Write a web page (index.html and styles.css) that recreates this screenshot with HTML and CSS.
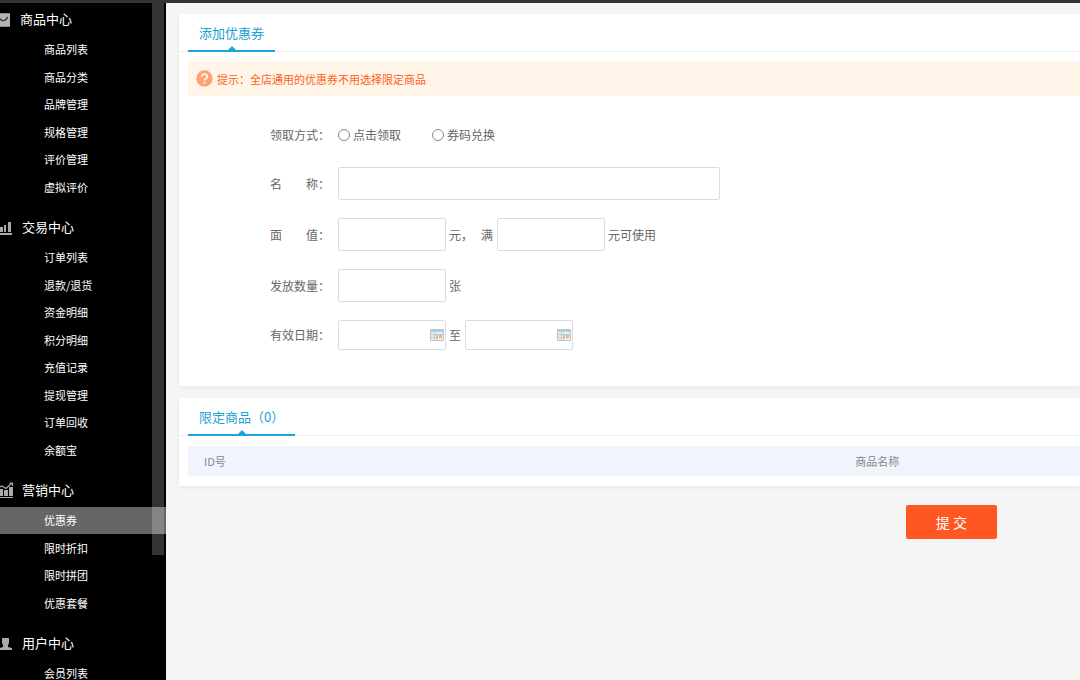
FILE: index.html
```html
<!DOCTYPE html>
<html lang="zh-CN">
<head>
<meta charset="utf-8">
<title>添加优惠券</title>
<link rel="stylesheet" href="styles.css">
</head>
<body>
<div class="topbar"></div>
<div class="layout">
  <nav class="sidebar">
    <div class="scroll-thumb"></div>
    <section class="group">
      <h2 class="group-title"><svg class="group-icon" width="14" height="16" viewBox="0 0 14 16"><path fill="#b4b4b4" d="M0 2h10v14H0z"/><path fill="none" stroke="#333" stroke-width="1.3" d="M0 7.500c1.500 3 6 3 7.500-1.500"/><path stroke="#888" d="M0 2.500h10M0 15.500h10"/></svg><span class="tight">商品中心</span></h2>
      <ul class="menu">
        <li><a href="#">商品列表</a></li>
        <li><a href="#">商品分类</a></li>
        <li><a href="#">品牌管理</a></li>
        <li><a href="#">规格管理</a></li>
        <li><a href="#">评价管理</a></li>
        <li><a href="#">虚拟评价</a></li>
      </ul>
    </section>
    <section class="group">
      <h2 class="group-title"><svg class="group-icon" width="14" height="16" viewBox="0 0 14 16"><path fill="#aaa" d="M0 8h3v5H0zM4 6h2v7H4zM8 3h3v10H8zM0 14h12v2H0z"/></svg><span>交易中心</span></h2>
      <ul class="menu">
        <li><a href="#">订单列表</a></li>
        <li><a href="#">退款/退货</a></li>
        <li><a href="#">资金明细</a></li>
        <li><a href="#">积分明细</a></li>
        <li><a href="#">充值记录</a></li>
        <li><a href="#">提现管理</a></li>
        <li><a href="#">订单回收</a></li>
        <li><a href="#">余额宝</a></li>
      </ul>
    </section>
    <section class="group">
      <h2 class="group-title"><svg class="group-icon" width="14" height="16" viewBox="0 0 14 16"><path fill="#aaa" d="M0 7h3v7H0zM4 8h4v6H4zM9 5h4v9H9zM0 15h13v1H0z"/><path fill="none" stroke="#aaa" stroke-width="1.200" d="M0 5l2-1 4 2.500 6-5.500M9.500 1h3v3"/></svg><span>营销中心</span></h2>
      <ul class="menu">
        <li class="active"><a href="#" aria-current="page">优惠券</a></li>
        <li><a href="#">限时折扣</a></li>
        <li><a href="#">限时拼团</a></li>
        <li><a href="#">优惠套餐</a></li>
      </ul>
    </section>
    <section class="group">
      <h2 class="group-title"><svg class="group-icon" width="14" height="16" viewBox="0 0 14 16"><path fill="#aaa" d="M2 3h7v5L8 10v2l4 1v2H0v-2l3-1v-2L2 8z"/></svg><span>用户中心</span></h2>
      <ul class="menu">
        <li><a href="#">会员列表</a></li>
      </ul>
    </section>
  </nav>
  <main class="content">
    <form class="coupon-form">
      <section class="panel">
        <header class="panel-head"><h1 class="tab">添加优惠券</h1></header>
        <p class="tip"><svg width="17" height="17" viewBox="0 0 17 17"><circle cx="8.500" cy="8.500" r="8.200" fill="#ffa27a"/><path fill="none" stroke="#fff3e6" stroke-width="1.800" d="M5.800 6.800c0-3.600 5.500-3.600 5.500-.4 0 2-2.700 2-2.700 4.200"/><circle cx="8.600" cy="12.800" r="1.100" fill="#fff3e6"/></svg>提示：全店通用的优惠券不用选择限定商品</p>
        <div class="fields">
          <div class="row" role="radiogroup" aria-labelledby="way">
            <span class="label" id="way">领取方式：</span>
            <label class="choice"><input class="radio" type="radio" name="way">点击领取</label>
            <label class="choice"><input class="radio" type="radio" name="way">券码兑换</label>
          </div>
          <div class="row">
            <label class="label" for="name">名　　称：</label>
            <input class="box wide" id="name" type="text">
          </div>
          <div class="row">
            <label class="label" for="amount">面　　值：</label>
            <input class="box" id="amount" type="text">
            <span class="unit">元，</span>
            <label class="over" for="minimum">满</label>
            <input class="box" id="minimum" type="text">
            <span class="unit">元可使用</span>
          </div>
          <div class="row">
            <label class="label" for="count">发放数量：</label>
            <input class="box" id="count" type="text">
            <span class="unit">张</span>
          </div>
          <div class="row">
            <label class="label" for="start">有效日期：</label>
            <span class="date"><input class="box short" id="start" type="text"><svg class="calendar" width="14" height="12" viewBox="0 0 14 12"><path fill="#e9eef2" stroke="#b8c4ce" d="M.5.5h13v11H.5z"/><path fill="#a9d0ea" d="M1 1h12v2H1z"/><path stroke="#bccad6" d="M1 5.500h12M4.500 3v8M1 8.500h4"/><path fill="#f3b47c" d="M6 6h2v4H6zM9 6h3v3H9z"/></svg></span>
            <label class="unit" for="end">至</label>
            <span class="date"><input class="box short" id="end" type="text"><svg class="calendar" width="14" height="12" viewBox="0 0 14 12"><path fill="#e9eef2" stroke="#b8c4ce" d="M.5.5h13v11H.5z"/><path fill="#a9d0ea" d="M1 1h12v2H1z"/><path stroke="#bccad6" d="M1 5.500h12M4.500 3v8M1 8.500h4"/><path fill="#f3b47c" d="M6 6h2v4H6zM9 6h3v3H9z"/></svg></span>
          </div>
        </div>
      </section>
      <section class="panel goods">
        <header class="panel-head"><h2 class="tab">限定商品（0）</h2></header>
        <table class="goods-table">
          <thead><tr><th class="col-id" scope="col">ID号</th><th scope="col">商品名称</th></tr></thead>
        </table>
      </section>
      <div class="actions"><button class="submit" type="button">提 交</button></div>
    </form>
  </main>
</div>
</body>
</html>
```
FILE: styles.css
```css
* { box-sizing: border-box; }
body {
  margin: 0;
  height: 100vh;
  overflow: hidden;
  display: flex;
  flex-direction: column;
  background: #f5f5f5;
  color: #666;
  font: 12px/18px "Noto Sans CJK SC", sans-serif;
}
h1, h2, p, ul { margin: 0; padding: 0; font-weight: 400; }
input, button { font: inherit; margin: 0; }

.topbar { flex: none; height: 3px; background: #333; }
.layout { flex: 1; min-height: 0; display: flex; }

.sidebar {
  position: relative;
  flex: none;
  width: 166px;
  overflow: hidden;
  background: #000;
}
.scroll-thumb {
  position: absolute;
  top: 0;
  right: 2px;
  width: 12px;
  height: 552px;
  background: #333;
}
.group { padding-bottom: 10px; }
.group-title {
  display: flex;
  align-items: center;
  gap: 8px;
  height: 32px;
  color: #fff;
  font-size: 13px;
}
.group-icon { flex: none; }
.tight { margin-left: -2px; }
.menu { padding-top: 1px; list-style: none; font-size: 11px; }
.menu li { position: relative; line-height: 27px; }
.menu li:nth-child(even) { line-height: 28px; }
.menu a { display: block; padding-left: 44px; color: #fff; text-decoration: none; }
.menu .active { background: rgba(255, 255, 255, .4); }

.content { flex: 1; min-width: 0; padding: 11px 0 0 13px; }
.panel {
  padding-left: 9px;
  background: #fff;
  box-shadow: 0 2px 4px rgba(0, 0, 0, .05);
}
.panel-head {
  display: flex;
  height: 38px;
  margin-left: -9px;
  padding-left: 9px;
  background: linear-gradient(#eee, #eee) bottom / 100% 1px no-repeat;
}
.tab {
  position: relative;
  padding: 0 11px;
  border-bottom: 2px solid #1ba5d8;
  color: #1ba0d3;
  font-size: 13px;
  line-height: 38px;
}
.tab::after {
  content: "";
  position: absolute;
  left: 50%;
  bottom: 0;
  margin-left: -4px;
  border: 4px solid transparent;
  border-top: 0;
  border-bottom-color: #1ba5d8;
}
.tip {
  display: flex;
  align-items: center;
  gap: 4px;
  height: 35px;
  margin-top: 9px;
  padding-left: 8px;
  background: #fff5e8;
  color: #ff5f1c;
  font-size: 11px;
}
.fields {
  display: flex;
  flex-direction: column;
  gap: 18px;
  padding: 25px 0 36px 82px;
}
.row { display: flex; align-items: center; min-height: 28px; }
.label { flex: none; width: 68px; }
.choice { display: flex; align-items: center; gap: 3px; margin-right: 31px; }
.radio {
  appearance: none;
  width: 12px;
  height: 12px;
  border: 1px solid #888;
  border-radius: 50%;
  background: #fff;
}
.radio:checked { box-shadow: inset 0 0 0 2px #fff; background: #1ba5d8; }
.box {
  width: 108px;
  height: 33px;
  padding: 0 6px;
  border: 1px solid #dcdce0;
  border-radius: 2px;
  background: #fff;
}
.wide { width: 382px; }
.short { height: 30px; padding-right: 20px; }
.unit { margin: 0 4px 0 3px; }
.over { margin: 0 4px; }
.date { position: relative; display: flex; }
.calendar { position: absolute; top: 9px; right: 2px; }

.goods { margin-top: 12px; padding-bottom: 10px; }
.goods-table {
  width: 100%;
  margin-top: 10px;
  border-collapse: collapse;
  table-layout: fixed;
  background: #f0f4fc;
}
.goods-table th {
  height: 30px;
  padding: 0 16px;
  color: #888;
  font-size: 11px;
  font-weight: 400;
  text-align: left;
}
.goods-table .col-id { width: 73%; }

.actions { display: flex; justify-content: flex-end; padding: 19px 83px 0 0; }
.submit {
  height: 34px;
  padding: 0 30px;
  border: 0;
  border-radius: 2px;
  background: #ff5722;
  color: #fff;
  font-size: 14px;
}
```
